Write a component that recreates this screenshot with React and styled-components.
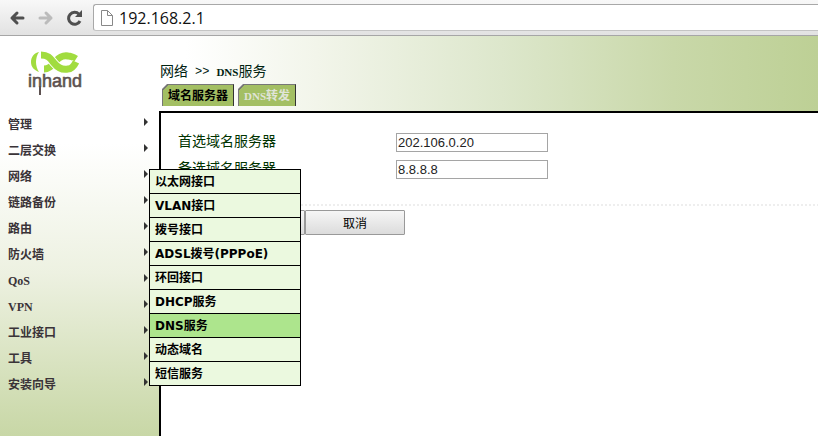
import React, { useState } from "react";
import styled, { createGlobalStyle } from "styled-components";

const GlobalStyle = createGlobalStyle`
  * {
    box-sizing: border-box;
  }
  body {
    margin: 0;
    background: #fff;
    font-family: "Liberation Serif", "Noto Sans CJK SC", serif;
    font-size: 12px;
  }
`;

const Page = styled.div`
  display: flex;
  flex-direction: column;
  min-height: 100vh;
`;

const BrowserBar = styled.div`
  display: flex;
  align-items: center;
  height: 36px;
  padding-left: 6px;
  border-bottom: 1px solid #a6a6a6;
  background: linear-gradient(#f8f8f8, #e2e2e2);
`;

const NavButton = styled.button`
  display: flex;
  width: 29px;
  padding: 0 2px;
  border: 0;
  background: none;
  color: ${(p) => (p.disabled ? "#bbb" : "#4f4f4f")};
`;

const AddressBar = styled.label`
  display: flex;
  flex: 1;
  align-items: center;
  gap: 6px;
  height: 27px;
  padding-left: 7px;
  border: 1px solid #a8a8a8;
  border-bottom-color: #c4c4c4;
  border-right: 0;
  border-radius: 3px 0 0 3px;
  background: #fff;
`;

const Address = styled.input`
  flex: 1;
  min-width: 0;
  padding: 0;
  border: 0;
  outline: 0;
  background: none;
  color: #111;
  font: 16px/24px "Open Sans", "Noto Sans", sans-serif;
`;

const Body = styled.div`
  display: grid;
  flex: 1;
  grid-template-columns: 159px 1fr;
  grid-template-rows: 75px 1fr;
`;

const Brand = styled.div`
  padding: 15px 0 0 27px;
`;

const Top = styled.header`
  display: flex;
  flex-direction: column;
  justify-content: space-between;
  padding: 26px 0 5px 1px;
  background: linear-gradient(to right, #fff 4%, #f2f5ea 24%, #dde7cc 52%, #c9d8a9 78%, #bdd095);
`;

const Crumbs = styled.div`
  display: flex;
  gap: 7px;
  color: #021;
  font-size: 14px;
  line-height: 20px;
`;

const Latin = styled.span`
  font-family: ${(p) => (p.$mono ? `"Liberation Mono", monospace` : `"Liberation Serif", serif`)};
  font-size: ${(p) => (p.$mono ? 12 : 11)}px;
  font-weight: ${(p) => (p.$mono ? 400 : 700)};
`;

const Tabs = styled.nav`
  display: flex;
  gap: 4px;
  padding-left: 2px;
`;

const Tab = styled.button`
  height: 22px;
  padding: 0 5px;
  border: 1px solid #777;
  border-right-color: #333;
  border-bottom: 0;
  background: linear-gradient(135deg, #777 4px, #a3bf63 4px);
  clip-path: polygon(0 5px, 5px 0, 100% 0, 100% 100%, 0 100%);
  color: ${(p) => (p.$active ? "#000" : "#e0e4d8")};
  font: bold 12px/20px "Liberation Serif", "Noto Sans CJK SC", serif;
`;

const Side = styled.aside`
  padding-top: 1px;
  background: linear-gradient(#fff 10%, #edf1e1 50%, #c8d7a6);
`;

const SideList = styled.ul`
  margin: 0;
  padding: 0;
  list-style: none;
`;

const SideItem = styled.li`
  position: relative;
  display: flex;
  justify-content: space-between;
  height: 26px;
  padding: 0 11px 0 8px;
`;

const SideLink = styled.a`
  color: #3a3338;
  font-weight: bold;
  line-height: 26px;
  text-decoration: none;
`;

const Arrow = styled.span`
  height: 0;
  margin-top: 6px;
  border: 4px solid transparent;
  border-left-color: #333;
  border-right: 0;
`;

const SubMenu = styled.ul`
  position: absolute;
  z-index: 2;
  top: 5px;
  left: 149px;
  width: 152px;
  margin: 0;
  padding: 0;
  border: 1px solid #000;
  border-top: 0;
  list-style: none;
`;

const SubLink = styled.a`
  display: block;
  height: 24px;
  padding-left: 5px;
  border-top: 1px solid #000;
  background: ${(p) => (p.$active ? "#ade58d" : "#ebf9df")};
  color: #000;
  font: bold 12px/24px "DejaVu Sans", "Noto Sans CJK SC", sans-serif;
  text-decoration: none;
`;

const Main = styled.main`
  padding-top: 16px;
  border-top: 2px solid #000;
  border-left: 2px solid #000;
  background: #fff;
`;

const Fields = styled.div`
  display: grid;
  gap: 1px;
  padding: 0 17px;
`;

const Field = styled.div`
  display: grid;
  grid-template-columns: 218px 152px;
  align-items: center;
  height: 26px;
`;

const Label = styled.label`
  color: #030;
  font-size: 14px;
  line-height: 20px;
`;

const TextBox = styled.input`
  height: 19px;
  padding: 0 1px;
  border: 1px solid #a5a5a5;
  color: #222;
  font: 13px/17px "Liberation Sans", sans-serif;
`;

const Divider = styled.hr`
  height: 2px;
  margin: 22px 0 4px;
  border: 0;
  background: repeating-linear-gradient(to right, #eee 0 2px, #fff 2px 4px);
`;

const Actions = styled.div`
  display: flex;
  padding-left: 44px;
`;

const Action = styled.button`
  width: 100px;
  height: 25px;
  padding: 0;
  border: 1px solid #999;
  border-radius: 1px;
  background: linear-gradient(#f6f6f6, #dcdcdc);
  color: #000;
  font: 12px/20px "Noto Sans CJK SC", sans-serif;
`;

const Wordmark = styled.text`
  fill: #5d5150;
  stroke: #5d5150;
  stroke-width: 0.6px;
  font: 18px "Liberation Sans", sans-serif;
`;

const Logo = () => (
  <svg width="58" height="46" viewBox="0 0 58 46">
    <path d="M12 1C7 2 4 6 4 11c0 5 3 8 8 10C8 15 8 7 12 1z" fill="#a1dc3f" />
    <path
      d="M17 18c5 0 8-3 11-7s8-7 13-6c3 0 5 1 8 3"
      fill="none"
      stroke="#a1dc3f"
      strokeWidth="7"
    />
    <path
      d="M14 4c7 0 9 3 13 8s9 7 14 6c4 0 6-3 8-7"
      fill="none"
      stroke="#fff"
      strokeWidth="9"
    />
    <path
      d="M14 4c7 0 9 3 13 8s9 7 14 6c4 0 6-3 8-7"
      fill="none"
      stroke="#a1dc3f"
      strokeWidth="7"
    />
    <Wordmark x="1" y="36">
      inhand
    </Wordmark>
    <path d="M13 35v9" stroke="#5d5150" strokeWidth="2" />
  </svg>
);

const BackIcon = ({ flip }) => (
  <svg width="18" height="16" viewBox="0 0 18 16">
    <path
      d="M9 3L4 8l5 5M4 8h11"
      fill="none"
      stroke="currentColor"
      strokeWidth="3"
      strokeLinecap="round"
      strokeLinejoin="round"
      transform={flip ? "rotate(180 9 8)" : undefined}
    />
  </svg>
);

const ReloadIcon = () => (
  <svg width="18" height="16" viewBox="0 0 18 16">
    <path
      d="M13 4.2A6 6 0 1 0 14 11"
      fill="none"
      stroke="currentColor"
      strokeWidth="3"
    />
    <path d="M16 0v7H9z" fill="currentColor" />
  </svg>
);

const PageIcon = () => (
  <svg width="12" height="16" viewBox="0 0 12 16">
    <path
      d="M.5.5h6l5 5v10H.5zM6.5.5v5h5"
      fill="#fff"
      stroke="#888"
    />
  </svg>
);

const menu = [
  { text: "管理" },
  { text: "二层交换" },
  { text: "网络", open: true },
  { text: "链路备份" },
  { text: "路由" },
  { text: "防火墙" },
  { text: "QoS" },
  { text: "VPN" },
  { text: "工业接口" },
  { text: "工具" },
  { text: "安装向导" },
];

const networkMenu = [
  "以太网接口",
  "VLAN接口",
  "拨号接口",
  "ADSL拨号(PPPoE)",
  "环回接口",
  "DHCP服务",
  "DNS服务",
  "动态域名",
  "短信服务",
];

const App = () => {
  const [url, setUrl] = useState("192.168.2.1");
  const [dns, setDns] = useState({ first: "202.106.0.20", second: "8.8.8.8" });

  return (
    <Page>
      <GlobalStyle />
      <BrowserBar>
        <NavButton aria-label="后退">
          <BackIcon />
        </NavButton>
        <NavButton aria-label="前进" disabled>
          <BackIcon flip />
        </NavButton>
        <NavButton aria-label="刷新">
          <ReloadIcon />
        </NavButton>
        <AddressBar>
          <PageIcon />
          <Address
            aria-label="地址"
            value={url}
            onChange={(e) => setUrl(e.target.value)}
          />
        </AddressBar>
      </BrowserBar>
      <Body>
        <Brand>
          <Logo />
        </Brand>
        <Top>
          <Crumbs>
            <span>网络</span>
            <Latin $mono>&gt;&gt;</Latin>
            <span>
              <Latin>DNS</Latin>服务
            </span>
          </Crumbs>
          <Tabs>
            <Tab $active>域名服务器</Tab>
            <Tab>
              <Latin>DNS</Latin>转发
            </Tab>
          </Tabs>
        </Top>
        <Side>
          <SideList>
            {menu.map((item) => (
              <SideItem key={item.text}>
                <SideLink href="#">{item.text}</SideLink>
                <Arrow />
                {item.open && (
                  <SubMenu>
                    {networkMenu.map((name) => (
                      <li key={name}>
                        <SubLink href="#" $active={name === "DNS服务"}>
                          {name}
                        </SubLink>
                      </li>
                    ))}
                  </SubMenu>
                )}
              </SideItem>
            ))}
          </SideList>
        </Side>
        <Main>
          <Fields>
            <Field>
              <Label htmlFor="first">首选域名服务器</Label>
              <TextBox
                id="first"
                value={dns.first}
                onChange={(e) => setDns({ ...dns, first: e.target.value })}
              />
            </Field>
            <Field>
              <Label htmlFor="second">备选域名服务器</Label>
              <TextBox
                id="second"
                value={dns.second}
                onChange={(e) => setDns({ ...dns, second: e.target.value })}
              />
            </Field>
          </Fields>
          <Divider />
          <Actions>
            <Action>应用</Action>
            <Action>取消</Action>
          </Actions>
        </Main>
      </Body>
    </Page>
  );
};

export default App;
